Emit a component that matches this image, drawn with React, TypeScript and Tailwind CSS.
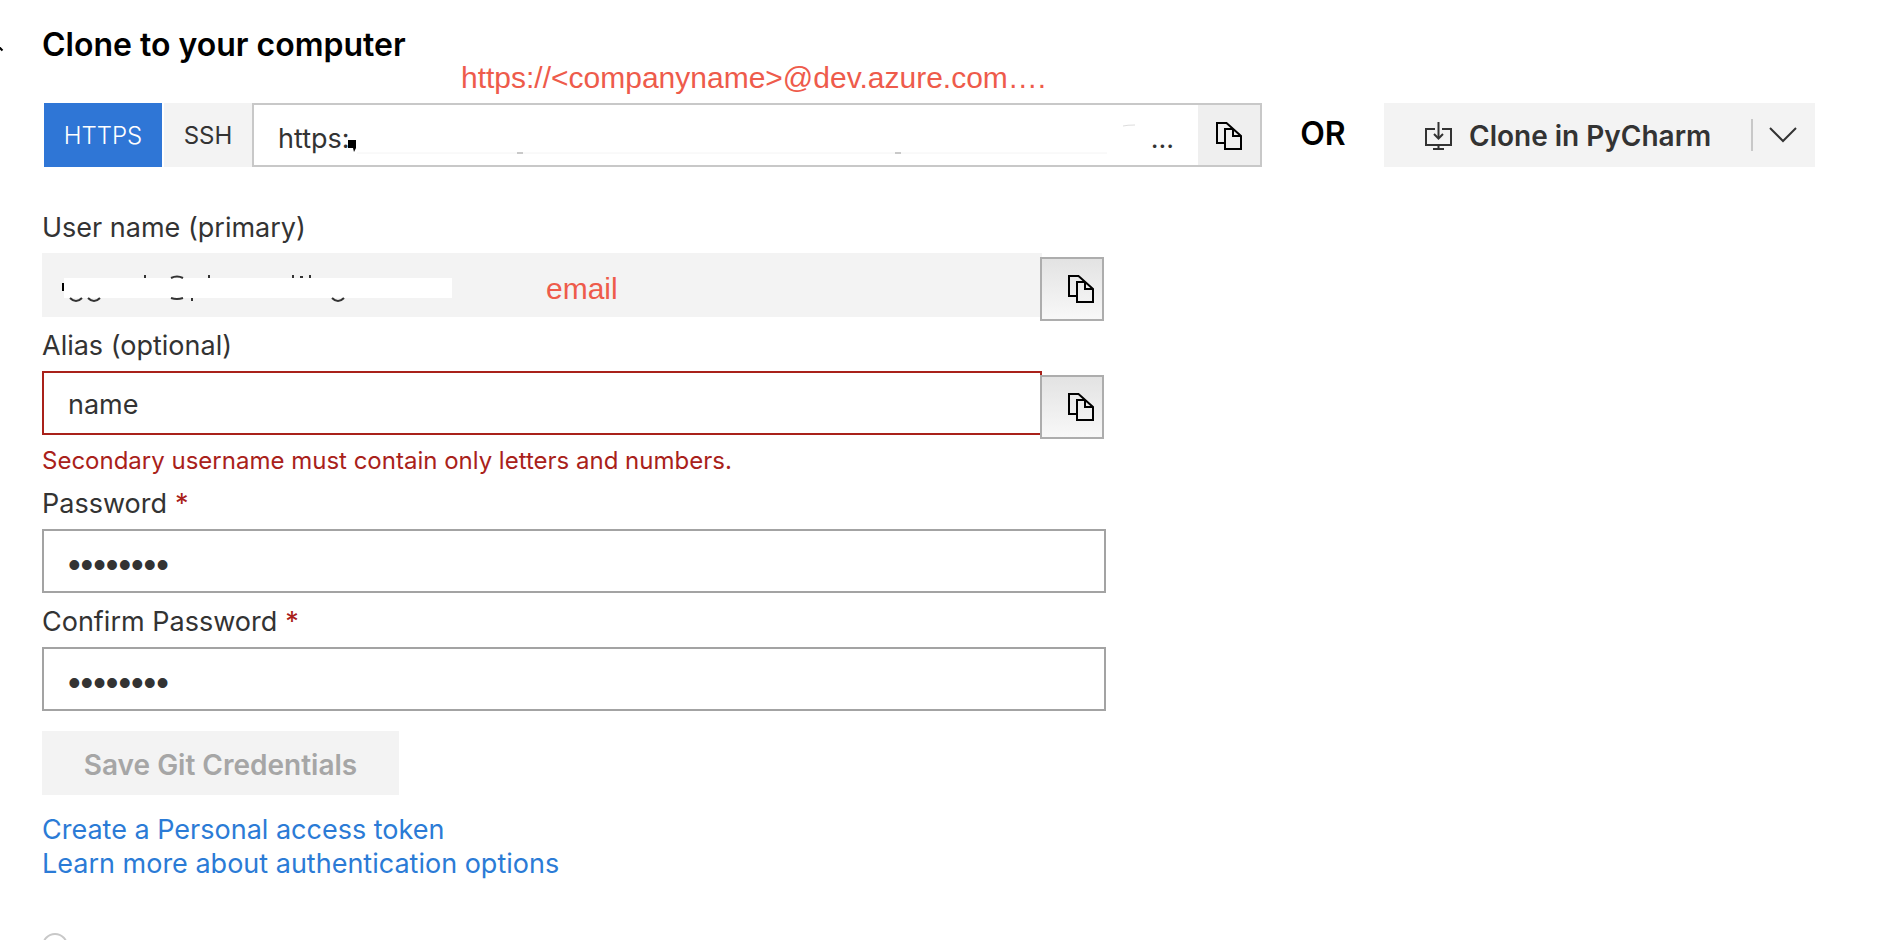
import React, { useState } from 'react';

type Protocol = 'https' | 'ssh';

function CopyIcon() {
  return (
    <svg width="26" height="28" viewBox="0 0 26 28" fill="none" stroke="#000" strokeWidth="2" aria-hidden="true">
      <path d="M9 21H1V1h9.500L25 14v13H9V7h8" />
      <path d="M17 7v7h8" />
    </svg>
  );
}

function CloneIcon() {
  return (
    <svg width="28" height="28" viewBox="0 0 28 28" fill="none" stroke="#333" strokeWidth="2" aria-hidden="true">
      <path d="M10 7H1v16h25V7h-9" />
      <path d="M13.500 0v16" />
      <path d="M9 12l4.500 4.500L18 12" />
      <path d="M13.500 23v4M8 27h11" />
    </svg>
  );
}

interface FieldLabelProps {
  htmlFor: string;
  required?: boolean;
  children: React.ReactNode;
}

function FieldLabel({ htmlFor, required, children }: FieldLabelProps) {
  return (
    <label htmlFor={htmlFor} className="flex h-[54px] items-center gap-2 pt-1 leading-8">
      {children}
      {required && <span className="text-[#a9211a]">*</span>}
    </label>
  );
}

interface PasswordInputProps {
  id: string;
  value: string;
  onChange: (value: string) => void;
}

function PasswordInput({ id, value, onChange }: PasswordInputProps) {
  return (
    <input
      id={id}
      type="password"
      value={value}
      onChange={(e) => onChange(e.target.value)}
      className="block h-16 w-full border-2 border-[#a3a3a3] px-6 pt-2 font-['Liberation_Sans',sans-serif] text-[36px] outline-none"
    />
  );
}

function CopyButton({ label }: { label: string }) {
  return (
    <button
      type="button"
      aria-label={label}
      className="mt-1 -mb-1 -ml-0.5 flex h-16 w-16 shrink-0 items-center justify-end border-2 border-[#adadad] bg-linear-to-b from-[#e3e3e3] to-[#f8f8f8] pr-2"
    >
      <CopyIcon />
    </button>
  );
}

export default function App() {
  const [protocol, setProtocol] = useState<Protocol>('https');
  const [alias, setAlias] = useState('name');
  const [password, setPassword] = useState('password');
  const [confirm, setConfirm] = useState('password');

  return (
    <main className="relative h-screen overflow-hidden bg-white pr-[83px] pl-[42px] font-['Inter',sans-serif] text-[27px] text-[#333]">
      {/* tip of the back arrow */}
      <svg className="absolute top-[45px] left-0" width="4" height="8" viewBox="0 0 4 8" fill="none" stroke="#000" strokeWidth="2" aria-hidden="true">
        <path d="M-2 1l4.500 4.500" />
      </svg>

      <h1 className="flex h-[103px] items-start pt-[25px] text-[32px] leading-10 font-semibold text-black">
        Clone to your computer
      </h1>
      <p className="absolute top-[60px] left-[461px] font-['Liberation_Sans',sans-serif] text-[30px] leading-9 text-[#ee5b4b]">
        https://&lt;companyname&gt;@dev.azure.com….
      </p>

      {/* Clone url */}
      <div className="flex h-16 items-stretch pl-0.5">
        <div className="flex gap-0.5 text-[24px]">
          <button type="button" onClick={() => setProtocol('https')} aria-pressed={protocol === 'https'} className="w-[118px] bg-[#2f76d6] pt-0.5 font-light text-white">
            HTTPS
          </button>
          <button type="button" onClick={() => setProtocol('ssh')} aria-pressed={protocol === 'ssh'} className="w-[88px] bg-[#f3f3f3] pt-0.5">
            SSH
          </button>
        </div>
        <div className="relative flex min-w-0 flex-1 border-2 border-[#c8c8c8]">
          <input readOnly aria-label="Clone URL" value="https:" className="min-w-0 flex-1 pt-2 pl-6 outline-none" />
          <span className="pt-3.5 pr-6">...</span>
          <button type="button" aria-label="Copy clone URL" className="flex w-[62px] items-center justify-center bg-[#efefef] pt-0.5">
            <CopyIcon />
          </button>
          {/* remains of the hidden part of the url */}
          <svg className="pointer-events-none absolute top-[18px] left-[94px]" width="800" height="36" viewBox="0 0 800 36" fill="none" aria-hidden="true">
            <path d="M0 17h8v8l-2 4-1-4H0z" fill="#000" />
            <path d="M9 30h750" stroke="#f4f4f4" />
            <path d="M169 30h6M547 30h6" stroke="#999" />
            <path d="M775 3q4-1 12-1" stroke="#ddd" />
          </svg>
        </div>
        <span className="flex w-[122px] items-center justify-center pb-0.5 text-[32px] font-semibold text-black">OR</span>
        <div className="flex w-[431px] shrink-0 items-center bg-[#f3f3f3]">
          <button type="button" className="flex h-16 flex-1 items-center gap-4 pt-0.5 pl-[41px] text-[28px] font-semibold">
            <CloneIcon />
            Clone in PyCharm
          </button>
          <button type="button" aria-label="More IDEs" className="flex h-8 w-16 items-center border-l-2 border-[#c8c8c8] pl-4">
            <svg width="28" height="16" viewBox="0 0 28 16" fill="none" stroke="#333" strokeWidth="2" aria-hidden="true">
              <path d="M1 1l13 13L27 1" />
            </svg>
          </button>
        </div>
      </div>

      {/* Git credentials */}
      <form className="w-full max-w-[1064px] pt-8" onSubmit={(e) => e.preventDefault()}>
        <FieldLabel htmlFor="username">User name (primary)</FieldLabel>
        <div className="relative flex h-16">
          <input id="username" readOnly className="w-[1000px] min-w-0 bg-[#f3f3f3] px-6 outline-none" />
          <CopyButton label="Copy user name" />
          {/* masked address */}
          <svg className="pointer-events-none absolute top-5 left-5" width="400" height="32" viewBox="0 0 400 32" fill="none" stroke="#333" strokeWidth="2" aria-hidden="true">
            <path d="M1 10v8" stroke="#000" />
            <path d="M2 5h388v20H2z" fill="#fff" stroke="none" />
            <path d="M83 2v3M147 2v3M231 2v3M248 2v3M238 4h3" />
            <path d="M109 5q6-3 12 0" />
            <path d="M8 25q6 6 12 0M26 25q6 6 12 0M109 25q6 2 12 0M130 25v3M270 25q6 6 12 0" />
          </svg>
          <span className="pointer-events-none absolute top-[18px] left-[504px] font-['Liberation_Sans',sans-serif] text-[30px] leading-9 text-[#ee5b4b]">
            email
          </span>
        </div>

        <FieldLabel htmlFor="alias">Alias (optional)</FieldLabel>
        <div className="flex h-16">
          <input
            id="alias"
            value={alias}
            onChange={(e) => setAlias(e.target.value)}
            aria-invalid="true"
            aria-describedby="alias-error"
            className="w-[1000px] min-w-0 border-2 border-[#a9211a] px-6 pt-1 outline-none"
          />
          <CopyButton label="Copy alias" />
        </div>
        <p id="alias-error" className="flex h-10 items-end text-[24px] leading-7 text-[#a9211a]">
          Secondary username must contain only letters and numbers.
        </p>

        <FieldLabel htmlFor="password" required>Password</FieldLabel>
        <PasswordInput id="password" value={password} onChange={setPassword} />

        <FieldLabel htmlFor="confirm" required>Confirm Password</FieldLabel>
        <PasswordInput id="confirm" value={confirm} onChange={setConfirm} />

        <button type="submit" disabled className="mt-5 block h-16 w-[357px] bg-[#f3f3f3] pt-1 text-[28px] font-semibold text-[#a6a6a6]">
          Save Git Credentials
        </button>
      </form>

      <nav className="flex flex-col items-start pt-[18px] leading-[34px] text-[#2b7bd6]">
        <a href="#token">Create a Personal access token</a>
        <a href="#auth">Learn more about authentication options</a>
      </nav>

      {/* icon of the next section */}
      <svg className="mt-[52px]" width="26" height="26" viewBox="0 0 26 26" fill="none" stroke="#c8c8c8" strokeWidth="2" aria-hidden="true">
        <circle cx="13" cy="13" r="12" />
      </svg>
    </main>
  );
}
